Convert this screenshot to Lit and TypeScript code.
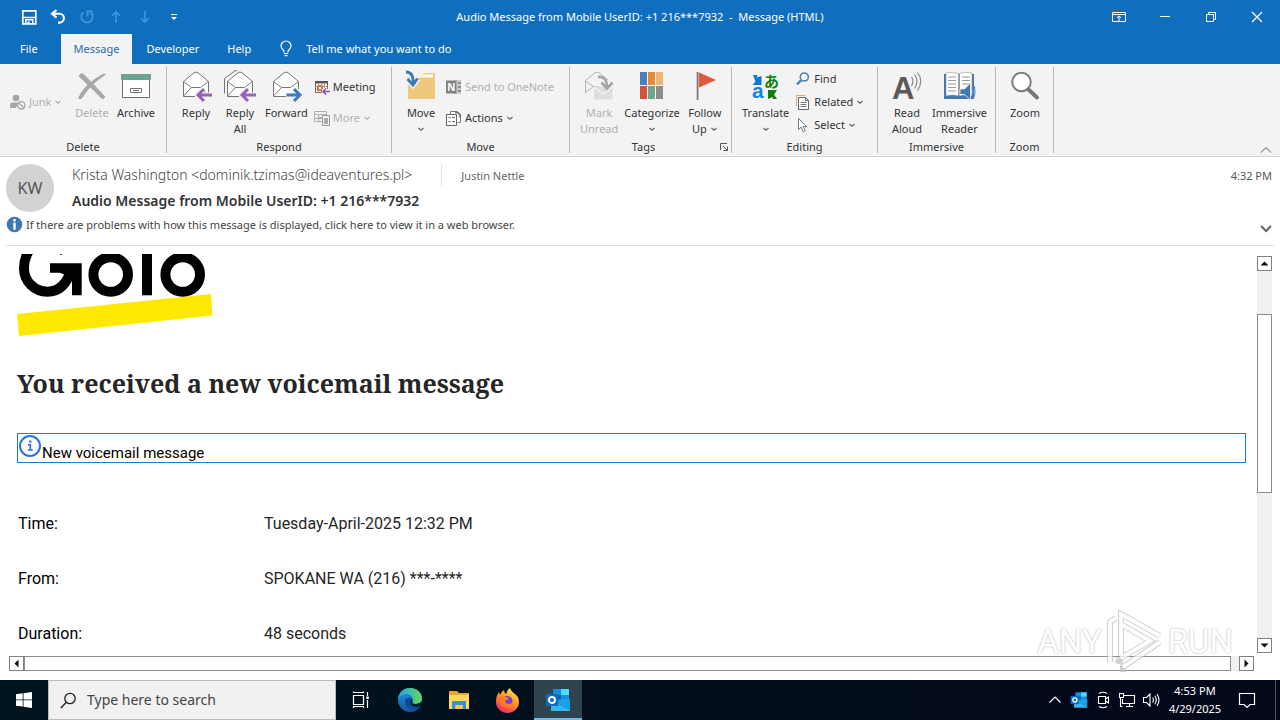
import { LitElement, html, css, nothing, TemplateResult } from "lit";
import { customElement } from "lit/decorators.js";
import { classMap } from "lit/directives/class-map.js";

const chevron = html`<svg class="chev" width="8" height="8" viewBox="0 0 8 8"><path d="M1.5 3 L4 5.2 L6.5 3" fill="none" stroke="currentColor" stroke-width="1.2"/></svg>`;

const icons = {
  save: html`<svg width="16" height="16" viewBox="0 0 16 16"><path d="M1.800 1.800h13v13h-13z" fill="none" stroke="#fff" stroke-width="1.700"/><path d="M2 8.500h12.500M4.800 14.500v-3.700h7v3.700" fill="none" stroke="#fff" stroke-width="1.500"/><path d="M6.500 12.500h2V15h-2z" fill="#fff"/></svg>`,
  undo: html`<svg width="16" height="16" viewBox="0 0 16 16"><path d="M6.500 1 L2 4.800 L6.500 8.600 M2.400 4.800 H9.500 A4.400 4.400 0 0 1 9.500 13.600 H8" fill="none" stroke="#fff" stroke-width="2.100"/></svg>`,
  redo: html`<svg width="16" height="16" viewBox="0 0 16 16"><path d="M11.500 3.200 A5.700 5.700 0 1 1 4.500 3.300 M8.500 7.500 V2.300 H13.500" fill="none" stroke="#3d93dc" stroke-width="2"/></svg>`,
  up: html`<svg width="16" height="16" viewBox="0 0 16 16"><path d="M8 14V3M4.200 6.600 L8 2.800 L11.800 6.600" fill="none" stroke="#3d93dc" stroke-width="1.700"/></svg>`,
  down: html`<svg width="16" height="16" viewBox="0 0 16 16"><path d="M8 2v11M4.200 9.400 L8 13.200 L11.800 9.400" fill="none" stroke="#3d93dc" stroke-width="1.700"/></svg>`,
  custom: html`<svg width="16" height="16" viewBox="0 0 16 16"><path d="M5 5.500h6" stroke="#fff"/><path d="M5 8h6L8 11z" fill="#fff"/></svg>`,
  ribbonMode: html`<svg width="16" height="16" viewBox="0 0 16 16"><path d="M1.500 3.500h13v9h-13zM1.500 5.500h13M8 12V7M6 8.800L8 6.900l2 1.900" fill="none" stroke="#fff"/></svg>`,
  min: html`<svg width="16" height="16" viewBox="0 0 16 16"><path d="M3 7.500h10" stroke="#fff"/></svg>`,
  restore: html`<svg width="16" height="16" viewBox="0 0 16 16"><path d="M3.500 5.500h7v7h-7zM5.500 5.500v-2h7v7h-2" fill="none" stroke="#fff"/></svg>`,
  close: html`<svg width="16" height="16" viewBox="0 0 16 16"><path d="M3 3l10 10M13 3L3 13" stroke="#fff" stroke-width="1.200"/></svg>`,
  bulb: html`<svg width="14" height="18" viewBox="0 0 14 18"><path d="M5 12.500V11 C3.500 9.500 2 8.300 2 6 A5 5 0 0 1 12 6 C12 8.300 10.500 9.500 9 11 V12.500 M5 13.500h4 M5.500 15.700h3" fill="none" stroke="#fff" stroke-width="1.200"/></svg>`,
  junk: html`<svg width="16" height="16" viewBox="0 0 16 16"><circle cx="6" cy="4" r="3.300" fill="#a6a6a6"/><path d="M0 14V10.500Q0 8.500 2.500 8.500H8L6 14z" fill="#a6a6a6"/><circle cx="11.300" cy="11.300" r="3.700" fill="#f3f3f3" stroke="#a6a6a6" stroke-width="1.300"/><path d="M8.700 8.700l5.200 5.200" stroke="#a6a6a6" stroke-width="1.300"/></svg>`,
  del: html`<svg width="32" height="32" viewBox="0 0 32 32"><path d="M2.500 6 Q5 1.500 8 4.500 Q17 13 29.500 27 L26.500 29.500 Q14 17 2.500 6z M30 4.500 Q15 14 6.500 27.500 Q4.500 30.500 2 28 Q8 14 27.500 3.500z" fill="#a8a8a8"/></svg>`,
  archive: html`<svg width="32" height="32" viewBox="0 0 32 32"><path d="M2.500 9.500h27v18h-27z" fill="#fff" stroke="#6d6d6d"/><path d="M1 4h30v6H1z" fill="#6ba292"/><path d="M10.500 18.500h11v4h-11zM13 20.500h6" fill="#fff" stroke="#777"/></svg>`,
  reply: html`<svg width="32" height="32" viewBox="0 0 32 32"><path d="M3.500 11.500L14 2.800Q16 1.300 18 2.800L28.500 11.500V26.500h-25z" fill="#fff" stroke="#747474"/><path d="M3.500 11.500L11.500 17.500H20.500L28.500 11.500M3.500 26L11.500 17.500M28.500 26L20.500 17.500" fill="none" stroke="#777"/><path d="M16.500 25H32M23 19l-6 6 6 6" fill="none" stroke="#f3f3f3" stroke-width="5"/><path d="M17.500 25H32M24 19l-6 6 6 6" fill="none" stroke="#9560b8" stroke-width="3"/></svg>`,
  replyAll: html`<svg width="32" height="32" viewBox="0 0 32 32"><path d="M.5 23.500V8.500L11 .8L13 .5" fill="none" stroke="#747474"/><path d="M3.500 11.500L14 2.800Q16 1.300 18 2.800L28.500 11.500V26.500h-25z" fill="#fff" stroke="#747474"/><path d="M3.500 11.500L11.500 17.500H20.500L28.500 11.500M3.500 26L11.500 17.500" fill="none" stroke="#777"/><path d="M16.500 25H32M23 19l-6 6 6 6" fill="none" stroke="#f3f3f3" stroke-width="5"/><path d="M17.500 25H32M24 19l-6 6 6 6" fill="none" stroke="#9560b8" stroke-width="3"/></svg>`,
  forward: html`<svg width="32" height="32" viewBox="0 0 32 32"><path d="M3.500 11.500L14 2.800Q16 1.300 18 2.800L28.500 11.500V26.500h-25z" fill="#fff" stroke="#747474"/><path d="M3.500 11.500L11.500 17.500H20.500L28.500 11.500M3.500 26L11.500 17.500" fill="none" stroke="#777"/><path d="M16 25H31M25 19l6 6-6 6" fill="none" stroke="#f3f3f3" stroke-width="5"/><path d="M16.500 25H30M24 19l6 6-6 6" fill="none" stroke="#3d7cc0" stroke-width="3"/></svg>`,
  meeting: html`<svg width="16" height="16" viewBox="0 0 16 16"><path d="M1.500 2.500h12v11h-12z" fill="#fff" stroke="#6b625c"/><path d="M1 2h13v2.500H1z" fill="#555"/><path d="M1.500 7.500h12M1.500 10.500h8M4.500 5v8.500M7.500 5v8.500M10.500 5v4" stroke="#c78a6b"/><path d="M3.500 6.500h5v5h-5z" fill="none" stroke="#d0703f"/><path d="M8 10h8v6H8z" fill="#f3f3f3"/><path d="M9 12.500h7M12 9.500l-3 3 3 3" fill="none" stroke="#8c55b0" stroke-width="1.700"/></svg>`,
  more: html`<svg width="16" height="16" viewBox="0 0 16 16"><path d="M.5 1.500h12v10H.5zM.5 4.500h12M3.500 7.500h5M4.500 4v7M.5 8.500h8" fill="none" stroke="#b0b0b0"/><path d="M8.500 5.500h7v10h-7z" fill="#f3f3f3" stroke="#9a9a9a"/><path d="M10 8h4v6h-4z" fill="#aaa"/></svg>`,
  move: html`<svg width="32" height="32" viewBox="0 0 32 32"><path d="M3 8h13l3-5h11v26H3z" fill="#eec87c"/><path d="M18.500 4.500h9.500v3H17z" fill="#fff"/><path d="M1 2Q9 3 8 14M2.500 9.500l5.500 6 5-6.500" fill="none" stroke="#f3f3f3" stroke-width="5"/><path d="M1 2Q9 2 8 14M2.500 9l5.500 6 4.500-6.500" fill="none" stroke="#3e78b5" stroke-width="2.800"/></svg>`,
  onenote: html`<svg width="16" height="16" viewBox="0 0 16 16"><path d="M8 1h7v14H8z" fill="#c9c9c9"/><path d="M12 3h3v2h-3zM12 7h3v2h-3zM12 11h3v2h-3z" fill="#8d8d8d"/><path d="M0 1.500h10.500v13H0z" fill="#828282"/><text x="5.300" y="12" font-size="10" font-weight="700" text-anchor="middle" fill="#fff">N</text></svg>`,
  actions: html`<svg width="16" height="16" viewBox="0 0 16 16"><path d="M4.500 4V1.500h7l3 3v8h-3" fill="#fff" stroke="#777"/><path d="M.5 4.500h10v11H.5z" fill="#fff" stroke="#666"/><path d="M2.500 7.500h2M2.500 11.500h2M6 7.500h3M6 11.500h3" stroke="#666"/><path d="M9 2.500q5-.5 5 5" fill="none" stroke="#777" stroke-width="1.500"/></svg>`,
  mark: html`<svg width="32" height="32" viewBox="0 0 32 32"><path d="M2.500 22.500V10.500L12 2.800Q14 1.500 16 2.800L25 10M2.500 11l8 5.500M2.500 22.500l8-6h5" fill="none" stroke="#b4b4b4"/><path d="M11 16.500h18.500v13H11z" fill="#dedede"/><path d="M11 17l9 7 9-7" fill="none" stroke="#f2f2f2" stroke-width="1.500"/><path d="M15 7q9-1 9 10M18.500 12.500l5.500 6 5.500-6" fill="none" stroke="#a4a4a4" stroke-width="2.600"/></svg>`,
  categorize: html`<svg width="32" height="32" viewBox="0 0 32 32"><path d="M4 2h7v13H4z" fill="#4a7fbb"/><path d="M12 2h7v13h-7z" fill="#e58a35"/><path d="M20 2h7v13h-7z" fill="#e9b877"/><path d="M4 16h7v13H4z" fill="#d4523b"/><path d="M12 16h7v13h-7z" fill="#71a590"/><path d="M20 16h7v13h-7z" fill="#8d8d8d"/></svg>`,
  flag: html`<svg width="32" height="32" viewBox="0 0 32 32"><path d="M9.500 2h-1.800v28h1.800z" fill="#777"/><path d="M10 2.500L27 10 10 17.500z" fill="#e0593c"/></svg>`,
  translate: html`<svg width="32" height="32" viewBox="0 0 32 32"><path d="M3 5h4.500l-1 2.500 5-1.500v9h-9l3-3.500z" fill="#0a78d4"/><path d="M18 20h9l-3 4.500 3 4.500h-4.500l.5-2-5 2z" fill="#107c10"/><text x="2" y="28" font-size="21" font-family="Liberation Sans, sans-serif" font-weight="700" fill="#1683dd">a</text><text x="14" y="17" font-size="15" font-family="Noto Sans CJK JP, sans-serif" font-weight="700" fill="#138013">あ</text></svg>`,
  find: html`<svg width="16" height="16" viewBox="0 0 16 16"><circle cx="9.300" cy="6" r="4" fill="#fff" stroke="#4d80b8" stroke-width="1.600"/><path d="M6.300 9L2 13.300" stroke="#4d80b8" stroke-width="2.400"/></svg>`,
  related: html`<svg width="16" height="16" viewBox="0 0 16 16"><path d="M1.500 12V1.500h9" fill="none" stroke="#dba978"/><path d="M3.500 3.500h7l3 3v9h-10z" fill="#fff" stroke="#666"/><path d="M10.500 3.500v3h3M5.500 8.500h6M5.500 10.500h6M5.500 12.500h6" fill="none" stroke="#777"/></svg>`,
  select: html`<svg width="16" height="16" viewBox="0 0 16 16"><path d="M3.500 1.500v11l2.700-2.300 2 4.500 2-.9-2-4.300h3.500z" fill="#fff" stroke="#777"/></svg>`,
  read: html`<svg width="32" height="32" viewBox="0 0 32 32"><text x="1" y="29" font-size="31" font-family="Liberation Sans, sans-serif" font-weight="700" fill="#5a5a5a">A</text><path d="M20.500 7q3 4 0 9M23.500 4.500q5 6.500 0 14M26.500 2.500q6.500 8.500 0 18" fill="none" stroke="#8a8a8a" stroke-width="1.200"/></svg>`,
  reader: html`<svg width="32" height="32" viewBox="0 0 32 32"><path d="M1 4h30v25H1z" fill="#3f77ae"/><path d="M3 3q6-1.500 12.500.5V26Q9 24 3 26zM29 3q-6-1.500-12.500.5V26q6-2 12.500 0z" fill="#fff" stroke="#909090" stroke-width=".6"/><path d="M5 7h8M5 10.500h8M5 14h8M5 17.500h8M5 21h8M19 7h8M19 10.500h8M19 14h8" stroke="#999"/><path d="M17 19h4.500l6-6v17l-6-5.500H17z" fill="#3f77ae" stroke="#f3f3f3" stroke-width=".8"/><path d="M29 17.500q2 4 0 8M31 16q2 5 0 11" fill="none" stroke="#5a8fc4" stroke-width="1.200"/></svg>`,
  zoom: html`<svg width="32" height="32" viewBox="0 0 32 32"><circle cx="12.500" cy="12" r="9.300" fill="#fff" stroke="#7d7d7d" stroke-width="2"/><path d="M19.500 19.500L28 27.500" stroke="#777" stroke-width="4" stroke-linecap="round"/></svg>`,
  launcher: html`<svg width="8" height="8" viewBox="0 0 8 8"><path d="M.5 7V.5H7M3 3l4 4M7.500 3.500v4h-4" fill="none" stroke="#555"/></svg>`,
};

interface Cmd { icon: TemplateResult; lines: string[]; menu?: boolean; off?: boolean; }
interface Group { name: string; cols: (Cmd | Cmd[])[]; launcher?: boolean; }

const groups: Group[] = [
  { name: "Delete", cols: [
    [{ icon: icons.junk, lines: ["Junk"], menu: true, off: true }],
    { icon: icons.del, lines: ["Delete"], off: true },
    { icon: icons.archive, lines: ["Archive"] } ] },
  { name: "Respond", cols: [
    { icon: icons.reply, lines: ["Reply"] },
    { icon: icons.replyAll, lines: ["Reply", "All"] },
    { icon: icons.forward, lines: ["Forward"] },
    [{ icon: icons.meeting, lines: ["Meeting"] }, { icon: icons.more, lines: ["More"], menu: true, off: true }] ] },
  { name: "Move", cols: [
    { icon: icons.move, lines: ["Move", ""], menu: true },
    [{ icon: icons.onenote, lines: ["Send to OneNote"], off: true }, { icon: icons.actions, lines: ["Actions"], menu: true }] ] },
  { name: "Tags", launcher: true, cols: [
    { icon: icons.mark, lines: ["Mark", "Unread"], off: true },
    { icon: icons.categorize, lines: ["Categorize", ""], menu: true },
    { icon: icons.flag, lines: ["Follow", "Up"], menu: true } ] },
  { name: "Editing", cols: [
    { icon: icons.translate, lines: ["Translate", ""], menu: true },
    [{ icon: icons.find, lines: ["Find"] }, { icon: icons.related, lines: ["Related"], menu: true }, { icon: icons.select, lines: ["Select"], menu: true }] ] },
  { name: "Immersive", cols: [
    { icon: icons.read, lines: ["Read", "Aloud"] },
    { icon: icons.reader, lines: ["Immersive", "Reader"] } ] },
  { name: "Zoom", cols: [{ icon: icons.zoom, lines: ["Zoom"] }] },
];

@customElement("mail-titlebar")
class MailTitlebar extends LitElement {
  static styles = css`
    :host { display: block; background: #106ebe; color: #fff; font: 11px/16px "Noto Sans", "Open Sans", sans-serif; }
    button { border: 0; background: none; padding: 0; font: inherit; color: inherit; display: flex; align-items: center; justify-content: center; }
    .bar { display: grid; grid-template-columns: 1fr auto 1fr; align-items: center; height: 34px; }
    .quick { display: flex; padding-left: 14px; }
    .quick button { width: 29px; height: 32px; }
    .title { white-space: pre; }
    .win { display: flex; justify-content: flex-end; }
    .win button { width: 46px; height: 30px; }
    nav { display: flex; height: 30px; padding-left: 8px; }
    .tab { padding: 0 14px; }
    .file { padding: 0 23px 0 12px; }
    .on { background: #f3f3f3; color: #2a6cae; padding: 0 13px; }
    .tell { display: flex; align-items: center; gap: 13px; padding-left: 14px; flex: 1; }
    .tell input { border: 0; background: none; outline: 0; padding: 0; font: inherit; color: #fff; width: 240px; }
    .tell input::placeholder { color: #fff; opacity: 1; }
  `;
  render() {
    const q: [string, TemplateResult][] = [["Save", icons.save], ["Undo", icons.undo], ["Redo", icons.redo], ["Previous item", icons.up], ["Next item", icons.down], ["Customize toolbar", icons.custom]];
    const w: [string, TemplateResult][] = [["Ribbon display options", icons.ribbonMode], ["Minimize", icons.min], ["Restore", icons.restore], ["Close", icons.close]];
    return html`
      <div class="bar">
        <div class="quick">${q.map(([l, i]) => html`<button aria-label=${l}>${i}</button>`)}</div>
        <div class="title">Audio Message from Mobile UserID: +1 216***7932  -  Message (HTML)</div>
        <div class="win">${w.map(([l, i]) => html`<button aria-label=${l}>${i}</button>`)}</div>
      </div>
      <nav>
        <button class="file">File</button>
        <button class="on">Message</button>
        <button class="tab">Developer</button>
        <button class="tab">Help</button>
        <label class="tell">${icons.bulb}<input aria-label="Tell me what you want to do" placeholder="Tell me what you want to do"></label>
      </nav>`;
  }
}

@customElement("mail-ribbon")
class MailRibbon extends LitElement {
  static styles = css`
    :host { display: flex; background: #f3f3f3; border-bottom: 1px solid #d2d0ce; font: 11px/16px "Noto Sans", "Open Sans", sans-serif; color: #333; }
    button { border: 0; background: none; padding: 0; margin: 0; font: inherit; color: inherit; }
    svg { overflow: visible; }
    .groups { display: grid; grid-template-columns: 167px 225px 178px 162px 146px 118px 58px; flex: 1; padding: 3px 0; }
    .group { display: flex; flex-direction: column; border-right: 1px solid #b9b9b9; }
    .cmds { display: flex; align-items: flex-start; height: 74px; padding-left: 7px; }
    .foot { display: flex; align-items: center; height: 12px; line-height: 12px; text-align: center; }
    .foot button { display: flex; padding: 0 3px; }
    .name { flex: 1; }
    .large { display: flex; flex-direction: column; align-items: center; min-width: 44px; padding: 3px 3px 0; white-space: nowrap; flex: none; }
    .large svg { flex: none; }
    .large .lbl { margin-top: 3px; display: flex; flex-direction: column; align-items: center; }
    .line { display: flex; align-items: center; height: 16px; gap: 3px; }
    .col { display: flex; flex-direction: column; justify-content: space-evenly; height: 70px; min-width: 63px; padding-left: 3px; box-sizing: border-box; }
    .small { display: flex; align-items: center; gap: 3px; height: 23px; white-space: nowrap; }
    .off { color: #b0b0b0; }
    .chev { color: #666; }
    .off .chev { color: #b0b0b0; }
    .collapse { align-self: flex-end; padding: 0 8px 2px; display: flex; }
  `;
  large(c: Cmd) {
    return html`<button class=${classMap({ large: true, off: !!c.off })} ?disabled=${c.off}>
      ${c.icon}
      <span class="lbl">${c.lines.map((t, i) => html`<span class="line">${t}${c.menu && i === c.lines.length - 1 ? chevron : nothing}</span>`)}</span>
    </button>`;
  }
  small(c: Cmd) {
    return html`<button class=${classMap({ small: true, off: !!c.off })} ?disabled=${c.off}>${c.icon}<span>${c.lines[0]}</span>${c.menu ? chevron : nothing}</button>`;
  }
  render() {
    return html`
      <div class="groups">${groups.map(g => html`
        <div class="group">
          <div class="cmds">${g.cols.map(c => Array.isArray(c) ? html`<div class="col">${c.map(s => this.small(s))}</div>` : this.large(c))}</div>
          <div class="foot"><span class="name">${g.name}</span>${g.launcher ? html`<button aria-label="Tags options">${icons.launcher}</button>` : nothing}</div>
        </div>`)}</div>
      <button class="collapse" aria-label="Collapse the ribbon"><svg width="12" height="8" viewBox="0 0 12 8"><path d="M1 6.500L6 1.500l5 5" fill="none" stroke="#555"/></svg></button>`;
  }
}

@customElement("mail-header")
class MailHeader extends LitElement {
  static styles = css`
    :host { display: block; padding: 7px 6px 0; font-family: "Noto Sans", "Open Sans", sans-serif; color: #444; }
    .top { display: flex; gap: 18px; }
    .avatar { flex: none; width: 48px; height: 48px; border-radius: 50%; background: #d2d2d2; display: flex; align-items: center; justify-content: center; font-size: 16px; color: #555; }
    .main { flex: 1; min-width: 0; }
    .people { display: flex; align-items: center; height: 22px; }
    .from { font-size: 14px; font-weight: 300; line-height: 22px; padding-right: 29px; border-right: 1px solid #e1e1e1; }
    .to { font-size: 11px; padding-left: 19px; flex: 1; color: #666; }
    .time { font-size: 11px; padding-right: 2px; color: #555; }
    h1 { font-size: 14px; line-height: 20px; font-weight: 600; margin: 5px 0 0; color: #333; }
    .info { display: flex; align-items: center; height: 24px; gap: 3px; font-size: 11px; color: #444; }
    .info a { color: inherit; text-decoration: none; flex: 1; }
    .expand { border: 0; background: none; padding: 10px 2px 0; display: flex; }
    hr { border: 0; height: 1px; background: #dcdcdc; margin: 9px 0 0; }
  `;
  render() {
    return html`
      <div class="top">
        <div class="avatar">KW</div>
        <div class="main">
          <div class="people"><span class="from">Krista Washington &lt;dominik.tzimas@ideaventures.pl&gt;</span><span class="to">Justin Nettle</span><span class="time">4:32 PM</span></div>
          <h1>Audio Message from Mobile UserID: +1 216***7932</h1>
        </div>
      </div>
      <div class="info">
        <svg width="17" height="17" viewBox="0 0 17 17"><circle cx="8.500" cy="8.500" r="7.800" fill="#3c78b4"/><path d="M7.300 3h2.400v2.400H7.300zM7.300 6.800h2.400v7H7.300z" fill="#fff"/></svg>
        <a href="#">If there are problems with how this message is displayed, click here to view it in a web browser.</a>
        <button class="expand" aria-label="Expand header"><svg width="12" height="8" viewBox="0 0 12 8"><path d="M1 1l5 5 5-5" fill="none" stroke="#666" stroke-width="2"/></svg></button>
      </div>
      <hr>`;
  }
}

@customElement("mail-body")
class MailBody extends LitElement {
  static styles = css`
    :host { display: grid; grid-template-columns: minmax(0, 1fr) 16px; grid-template-rows: minmax(0, 1fr) 15px; padding: 8px 8px 9px 9px; gap: 3px 0; position: relative; font: 16px/20px Roboto, sans-serif; color: #000; }
    .content { overflow: hidden; padding: 0 10px 0 8px; }
    .logo { display: block; }
    h2 { margin: 31px 0 34px; font: 700 25px/32px "Noto Serif", "DejaVu Serif Condensed", "Liberation Serif", serif; color: #262626; }
    .notice { display: flex; border: 1px solid #1f7ad1; height: 28px; font-size: 15px; }
    .notice svg { flex: none; }
    .notice span { padding-top: 9px; }
    table { border-collapse: collapse; margin-top: 33px; }
    th, td { height: 55px; padding: 0 0 0 1px; text-align: left; font-weight: 400; vertical-align: middle; }
    th { width: 245px; }
    td { color: #262626; }
    .vbar { display: flex; flex-direction: column; background: #f0f0f0; margin: 2px 0 0 1px; }
    .hbar { display: flex; background: #f0f0f0; margin-right: 2px; }
    .arrow { flex: none; width: 15px; height: 15px; box-sizing: border-box; border: 1px solid #808080; background: #fff; padding: 0; display: flex; align-items: center; justify-content: center; }
    .thumb { background: #fff; border: 1px solid #8c8c8c; box-sizing: border-box; }
    .before { flex: 43; }
    .vbar .thumb { flex: 178; }
    .after { flex: 146; }
    .hbar .thumb { flex: 1; margin-right: 8px; }
    .mark { position: absolute; right: 47px; bottom: 6px; display: flex; align-items: center; gap: 4px; font: 400 33px/64px "Roboto", sans-serif; color: #fff; text-shadow: 0 0 2px #aaa, 0 0 2px #ccc; opacity: .75; pointer-events: none; }
  `;
  render() {
    const rows = [["Time:", "Tuesday-April-2025 12:32 PM"], ["From:", "SPOKANE WA (216) ***-****"], ["Duration:", "48 seconds"]];
    const tri = (d: string) => html`<svg width="9" height="9" viewBox="0 0 9 9"><path d=${d} fill="#111"/></svg>`;
    return html`
      <div class="content">
        <svg class="logo" role="img" aria-label="GoTo" width="200" height="82" viewBox="17 254 200 82">
          <path d="M17 314L211 294 212.500 315.500 19 336z" fill="#ffe900"/>
          <path d="M29.500 250Q24 258 24 268.500A23.500 23.200 0 0 0 47.500 291.700C60 291.700 67.500 283 72 268" fill="none" stroke="#000" stroke-width="10"/>
          <path d="M50 263.300H81.700V295.300H72V278L60 272.700H50z"/>
          <path d="M60 254h2v.8h-2z"/>
          <circle cx="110.700" cy="274.500" r="17.300" fill="none" stroke="#000" stroke-width="10"/>
          <path d="M142 254h10v41.300h-10z"/>
          <circle cx="182.700" cy="274.500" r="17.300" fill="none" stroke="#000" stroke-width="10"/>
        </svg>
        <h2>You received a new voicemail message</h2>
        <div class="notice">
          <svg width="24" height="24" viewBox="0 0 24 24"><circle cx="12" cy="12" r="10" fill="none" stroke="#2f6fde" stroke-width="2"/><path d="M11.200 6.500h2.200v2.200h-2.200z" fill="#2f6fde"/><path d="M10 10.800h2.300v5M9.800 16h5" fill="none" stroke="#2f6fde" stroke-width="1.700"/></svg>
          <span>New voicemail message</span>
        </div>
        <table>${rows.map(([k, v]) => html`<tr><th scope="row">${k}</th><td>${v}</td></tr>`)}</table>
      </div>
      <div class="vbar">
        <button class="arrow" aria-label="Scroll up">${tri("M0.500 6.500L4.500 2.500l4 4z")}</button>
        <div class="before"></div><div class="thumb"></div><div class="after"></div>
        <button class="arrow" aria-label="Scroll down">${tri("M.5 2.500h8l-4 4z")}</button>
      </div>
      <div class="hbar">
        <button class="arrow" aria-label="Scroll left">${tri("M6.500.5v8l-4-4z")}</button>
        <div class="thumb"></div>
        <button class="arrow" aria-label="Scroll right">${tri("M2.500.5v8l4-4z")}</button>
      </div>
      <div class="mark"><span>ANY</span><svg width="58" height="64" viewBox="0 0 58 64"><path d="M4 52V12L10 8M15 46V4L54 26M15 14L44 31 15 48M54 32L17 57V62M17 52L10 50" fill="none" stroke="#c4c4c4" stroke-width="6"/><path d="M4 52V12L10 8M15 46V4L54 26M15 14L44 31 15 48M54 32L17 57" fill="none" stroke="#fff" stroke-width="3.800"/></svg><span>RUN</span></div>`;
  }
}

const outlook = (s: number) => html`<svg width=${s} height=${s} viewBox="0 0 26 26"><path d="M8 2h16v11H8z" fill="#1490df"/><path d="M16 2h8v6h-8z" fill="#50d9ff"/><path d="M8 8h8v6H8z" fill="#0364b8"/><path d="M6 13l19-1v11q0 1-1 1H7q-1 0-1-1z" fill="#1a9fe8"/><path d="M6 14l19 9.500q-.5.500-1 .500H7q-1 0-1-1z" fill="#35b8f1"/><path d="M1 7h12v12H1z" fill="#0f6cbd"/><circle cx="7" cy="13" r="3" fill="none" stroke="#fff" stroke-width="1.900"/></svg>`;

@customElement("task-bar")
class TaskBar extends LitElement {
  static styles = css`
    :host { display: flex; height: 40px; background: linear-gradient(90deg, #00161f, #020c1c 60%, #03081a); color: #fff; font: 11px/18px "Noto Sans", "Open Sans", sans-serif; }
    button { border: 0; background: none; padding: 0; color: inherit; font: inherit; display: flex; align-items: center; justify-content: center; }
    .app { width: 49px; }
    .start { width: 48px; }
    .active { width: 48px; margin-left: 2px; background: #2f444e; box-shadow: inset 0 -2px #76b9ed; }
    .search { display: flex; align-items: center; gap: 10px; width: 288px; box-sizing: border-box; padding-left: 11px; background: #f1f1f1; border: 1px solid #b8bcbe; }
    .search input { flex: 1; min-width: 0; border: 0; outline: 0; background: none; padding: 0; font: 14px/20px "Noto Sans", "Open Sans", sans-serif; color: #444; }
    .search input::placeholder { color: #444; opacity: 1; }
    .tray { margin-left: auto; display: flex; align-items: center; }
    .tray button { width: 24px; height: 40px; }
    .tray .clock { width: 64px; text-align: center; }
    .tray .note { width: 40px; margin-right: 8px; }
    .desk { width: 4px; height: 40px; border-left: 1px solid #4c5563; }
  `;
  render() {
    return html`
      <button class="start" aria-label="Start"><svg width="16" height="16" viewBox="0 0 16 16"><path d="M0 2.300L6.700 1.300V7.500H0zM7.500 1.200L16 0V7.500H7.500zM0 8.300H6.700V14.600L0 13.700zM7.500 8.300H16V16L7.500 14.800z" fill="#fff"/></svg></button>
      <label class="search"><svg width="17" height="17" viewBox="0 0 17 17"><circle cx="10" cy="6.500" r="5.200" fill="none" stroke="#222" stroke-width="1.300"/><path d="M6.300 10.300L.8 16" stroke="#222" stroke-width="1.300"/></svg><input aria-label="Search" placeholder="Type here to search"></label>
      <button class="app" aria-label="Task view"><svg width="18" height="18" viewBox="0 0 18 18"><path d="M1.500 4.500h10v9h-10zM1.500 2V.5M11.500 2V.5M1.500 1.500h10M1.500 17v-1.500h10V17M15.500 1v4M15.500 9v8" fill="none" stroke="#fff" stroke-width="1.200"/><path d="M14.300 5.500h2.500v2.500h-2.500z" fill="#fff"/></svg></button>
      <button class="app" aria-label="Edge"><svg width="26" height="26" viewBox="0 0 26 26"><defs><linearGradient id="e1" x1="0" x2="1"><stop offset="0" stop-color="#1fa5df"/><stop offset="1" stop-color="#66d65c"/></linearGradient><linearGradient id="e2" x1="0" y1="0" x2="0" y2="1"><stop offset="0" stop-color="#1b9de2"/><stop offset="1" stop-color="#1253a5"/></linearGradient></defs><circle cx="13" cy="13" r="12" fill="url(#e2)"/><path d="M1 12C2 4 8 1 13 1c8 0 12 6 12 10 0 4-3 6-6.500 6-3 0-4-1.500-3-3C17 11 14.500 7 10 7 5.500 7 2 9.500 1 12z" fill="url(#e1)"/><path d="M8 14C8 20 13 24 19 22.500Q22 21.500 24 19C19 21 13.500 19.500 13 15q-.3-2 1-4C10.500 10 8 12 8 14z" fill="#0d4b94"/><path d="M13.200 14.200q-.2 4.500 4.500 5.600 4 .6 6.300-.8l1.500-5q-3 3-7 3-4 0-2.800-3.200Q15 12 14 11.300z" fill="#00161f" opacity=".85"/></svg></button>
      <button class="app" aria-label="File Explorer"><svg width="24" height="24" viewBox="0 0 24 24"><path d="M2 3h8l2 2h10v5H2z" fill="#e8a92f"/><path d="M2 7h20v14H2z" fill="#ffd768"/><path d="M5 13h14v8h-3.500v-4h-7v4H5z" fill="#3d8ecb"/><path d="M8.500 17h7v4h-7z" fill="#f9c84e"/></svg></button>
      <button class="app" aria-label="Firefox"><svg width="25" height="25" viewBox="0 0 25 25"><defs><linearGradient id="f1" x1=".8" y1="0" x2=".3" y2="1"><stop offset="0" stop-color="#fff04a"/><stop offset=".45" stop-color="#ff9a1f"/><stop offset="1" stop-color="#f5226f"/></linearGradient></defs><path d="M15 0q.5 2.500 3 4.500Q24 8 24 14a11.500 11 0 0 1-23 0Q1 8 4 4q.3 2 1.500 2.500Q6 4 9 2q0 3 2.500 4Q11.500 2.500 15 0z" fill="url(#f1)"/><circle cx="12.500" cy="13" r="5" fill="#7a3fd0"/><path d="M4 8.500q3-1 6 .5 2 1 4 .8-1 2.500-4 2.700 0 3 3.500 3.500 3 0 4.500-2.500 0 6-6 6.500Q4 19.500 4 8.500z" fill="#ff7b24"/></svg></button>
      <button class="active" aria-label="Outlook">${outlook(26)}</button>
      <div class="tray">
        <button aria-label="Show hidden icons"><svg width="14" height="14" viewBox="0 0 14 14"><path d="M1.500 9.500L7 4l5.500 5.500" fill="none" stroke="#fff" stroke-width="1.200"/></svg></button>
        <button aria-label="Outlook status">${outlook(18)}</button>
        <button aria-label="Meet now"><svg width="16" height="18" viewBox="0 0 16 18"><path d="M3.500 5.500h7v7h-7zM10.500 8l3-2v6l-3-2M4 2.500q4-2.500 8 0M4 15.500q4 2.500 8 0" fill="none" stroke="#fff" stroke-width="1.100"/></svg></button>
        <button aria-label="Network"><svg width="18" height="16" viewBox="0 0 18 16"><path d="M5 3.500h11.500v8H4.500V7M8 14.500h7M11.500 11.500v3M1.500 1.500h4v4h-4zM2.500 5.500v9h2" fill="none" stroke="#fff" stroke-width="1.100"/></svg></button>
        <button aria-label="Volume"><svg width="18" height="16" viewBox="0 0 18 16"><path d="M1.500 5.500h3l3.500-3.500v12l-3.500-3.500h-3zM10.500 5.500q2 2.500 0 5M12.800 3.800q3 4.200 0 8.400M15 2q4 6 0 12" fill="none" stroke="#fff" stroke-width="1.100"/></svg></button>
        <button class="clock">4:53 PM<br>4/29/2025</button>
        <button class="note" aria-label="Notifications"><svg width="18" height="18" viewBox="0 0 18 18"><path d="M1.500 2.500h15v11H12L9 16.500 6 13.500H1.500z" fill="none" stroke="#fff" stroke-width="1.200"/></svg></button>
        <div class="desk"></div>
      </div>`;
  }
}

@customElement("app-root")
class AppRoot extends LitElement {
  static styles = css`
    :host { display: flex; flex-direction: column; height: 100vh; background: #fff; overflow: hidden; }
    .body { flex: 1; min-height: 0; }
  `;
  render() {
    return html`<mail-titlebar></mail-titlebar><mail-ribbon></mail-ribbon><mail-header></mail-header><mail-body class="body"></mail-body><task-bar></task-bar>`;
  }
}
